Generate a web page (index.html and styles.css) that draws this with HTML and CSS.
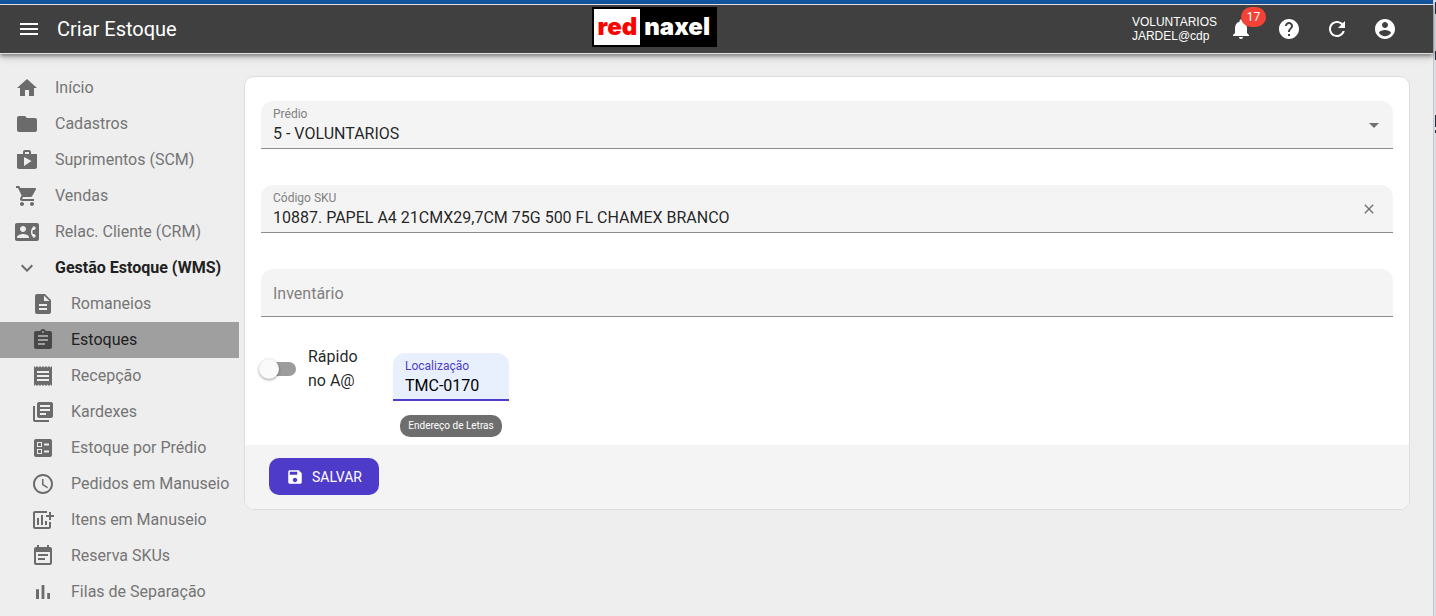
FILE: index.html
```html
<!DOCTYPE html>
<html lang="pt-BR">
<head>
<meta charset="utf-8">
<title>Criar Estoque</title>
<link rel="stylesheet" href="styles.css">
</head>
<body>
<div class="app">
  <header class="topbar">
    <button class="icon-btn" type="button" aria-label="Menu"><svg class="icon" viewBox="0 0 24 24"><path d="M3 18h18v-2H3v2zm0-5h18v-2H3v2zm0-7v2h18V6H3z"/></svg></button>
    <h1 class="title">Criar Estoque</h1>
    <div class="brand"><div class="logo"><span class="logo-red">red</span><span class="logo-naxel">naxel</span></div></div>
    <div class="user"><span>VOLUNTARIOS</span><span>JARDEL@cdp</span></div>
    <div class="actions">
      <button class="icon-btn" type="button" aria-label="Notificações"><svg class="icon" viewBox="0 0 24 24"><path d="M12 22c1.1 0 2-.9 2-2h-4c0 1.1.89 2 2 2zm6-6v-5c0-3.07-1.64-5.64-4.5-6.32V4c0-.83-.67-1.5-1.5-1.5s-1.5.67-1.5 1.5v.68C7.63 5.36 6 7.92 6 11v5l-2 2v1h16v-1l-2-2z"/></svg><span class="badge">17</span></button>
      <button class="icon-btn" type="button" aria-label="Ajuda"><svg class="icon" viewBox="0 0 24 24"><path d="M12 2C6.48 2 2 6.48 2 12s4.48 10 10 10 10-4.48 10-10S17.52 2 12 2zm1 17h-2v-2h2v2zm2.07-7.75l-.9.92C13.45 12.9 13 13.5 13 15h-2v-.5c0-1.1.45-2.1 1.17-2.83l1.24-1.26c.37-.36.59-.86.59-1.41 0-1.1-.9-2-2-2s-2 .9-2 2H8c0-2.21 1.79-4 4-4s4 1.79 4 4c0 .88-.36 1.68-.93 2.25z"/></svg></button>
      <button class="icon-btn" type="button" aria-label="Atualizar"><svg class="icon" viewBox="0 0 24 24"><path d="M17.65 6.35C16.2 4.9 14.21 4 12 4c-4.42 0-7.99 3.58-7.99 8s3.57 8 7.99 8c3.73 0 6.84-2.55 7.73-6h-2.08c-.82 2.33-3.04 4-5.65 4-3.31 0-6-2.69-6-6s2.69-6 6-6c1.66 0 3.14.69 4.22 1.78L13 11h7V4l-2.35 2.35z"/></svg></button>
      <button class="icon-btn" type="button" aria-label="Perfil"><svg class="icon" viewBox="0 0 24 24"><path d="M12 2C6.48 2 2 6.48 2 12s4.48 10 10 10 10-4.48 10-10S17.52 2 12 2zm0 3c1.66 0 3 1.34 3 3s-1.34 3-3 3-3-1.34-3-3 1.34-3 3-3zm0 14.2c-2.5 0-4.71-1.28-6-3.22.03-1.99 4-3.08 6-3.08 1.99 0 5.97 1.09 6 3.08-1.29 1.94-3.5 3.22-6 3.22z"/></svg></button>
    </div>
  </header>
  <div class="body">
    <nav class="sidebar">
      <a class="item" href="#"><svg class="icon" viewBox="0 0 24 24"><path d="M10 20v-6h4v6h5v-8h3L12 3 2 12h3v8z"/></svg>Início</a>
      <a class="item" href="#"><svg class="icon" viewBox="0 0 24 24"><path d="M10 4H4c-1.1 0-1.99.9-1.99 2L2 18c0 1.1.9 2 2 2h16c1.1 0 2-.9 2-2V8c0-1.1-.9-2-2-2h-8l-2-2z"/></svg>Cadastros</a>
      <a class="item" href="#"><svg class="icon" viewBox="0 0 24 24"><path d="M16 6V4c0-1.11-.89-2-2-2h-4c-1.11 0-2 .89-2 2v2H2v13c0 1.11.89 2 2 2h16c1.11 0 2-.89 2-2V6h-6zm-6-2h4v2h-4V4zM9 18V9l7.5 4L9 18z"/></svg>Suprimentos (SCM)</a>
      <a class="item" href="#"><svg class="icon" viewBox="0 0 24 24"><path d="M7 18c-1.1 0-1.99.9-1.99 2S5.9 22 7 22s2-.9 2-2-.9-2-2-2zM1 2v2h2l3.6 7.59-1.35 2.45c-.16.28-.25.61-.25.96 0 1.1.9 2 2 2h12v-2H7.42c-.14 0-.25-.11-.25-.25l.03-.12.9-1.63h7.45c.75 0 1.41-.41 1.75-1.03l3.58-6.49c.08-.14.12-.31.12-.48 0-.55-.45-1-1-1H5.21l-.94-2H1zm16 16c-1.1 0-1.99.9-1.99 2s.89 2 1.99 2 2-.9 2-2-.9-2-2-2z"/></svg>Vendas</a>
      <a class="item" href="#"><svg class="icon" viewBox="0 0 24 24"><path d="M22 3H2C.9 3 0 3.9 0 5v14c0 1.1.9 2 2 2h20c1.1 0 1.99-.9 1.99-2L24 5c0-1.1-.9-2-2-2zM8 6c1.66 0 3 1.34 3 3s-1.34 3-3 3-3-1.34-3-3 1.34-3 3-3zm6 12H2v-1c0-2 4-3.1 6-3.1s6 1.1 6 3.1v1zm3.85-4h1.64L21 16l-1.99 1.99c-1.31-.98-2.28-2.38-2.73-3.99-.18-.64-.28-1.31-.28-2s.1-1.36.28-2c.45-1.62 1.42-3.01 2.73-3.99L21 8l-1.51 2h-1.64c-.22.63-.35 1.3-.35 2s.13 1.37.35 2z"/></svg>Relac. Cliente (CRM)</a>
      <a class="item open" href="#"><svg class="icon" viewBox="0 0 24 24"><path d="M16.59 8.59L12 13.17 7.41 8.59 6 10l6 6 6-6z"/></svg>Gestão Estoque (WMS)</a>
      <a class="item sub" href="#"><svg class="icon" viewBox="0 0 24 24"><path d="M14 2H6c-1.1 0-1.99.9-1.99 2L4 20c0 1.1.89 2 1.99 2H18c1.1 0 2-.9 2-2V8l-6-6zm2 16H8v-2h8v2zm0-4H8v-2h8v2zm-3-5V3.5L18.5 9H13z"/></svg>Romaneios</a>
      <a class="item sub selected" href="#" aria-current="page"><svg class="icon" viewBox="0 0 24 24"><path d="M19 3h-4.18C14.4 1.84 13.3 1 12 1c-1.3 0-2.4.84-2.82 2H5c-1.1 0-2 .9-2 2v14c0 1.1.9 2 2 2h14c1.1 0 2-.9 2-2V5c0-1.1-.9-2-2-2zm-7 0c.55 0 1 .45 1 1s-.45 1-1 1-1-.45-1-1 .45-1 1-1zm2 14H7v-2h7v2zm3-4H7v-2h10v2zm0-4H7V7h10v2z"/></svg>Estoques</a>
      <a class="item sub" href="#"><svg class="icon" viewBox="0 0 24 24"><path d="M18 17H6v-2h12v2zm0-4H6v-2h12v2zm0-4H6V7h12v2zM3 22l1.5-1.5L6 22l1.5-1.5L9 22l1.5-1.5L12 22l1.5-1.5L15 22l1.5-1.5L18 22l1.5-1.5L21 22V2l-1.5 1.5L18 2l-1.5 1.5L15 2l-1.5 1.5L12 2l-1.5 1.5L9 2 7.5 3.5 6 2 4.5 3.5 3 2v20z"/></svg>Recepção</a>
      <a class="item sub" href="#"><svg class="icon" viewBox="0 0 24 24"><path d="M4 6H2v14c0 1.1.9 2 2 2h14v-2H4V6zm16-4H8c-1.1 0-2 .9-2 2v12c0 1.1.9 2 2 2h12c1.1 0 2-.9 2-2V4c0-1.1-.9-2-2-2zm-1 9H9V9h10v2zm-4 4H9v-2h6v2zm4-8H9V5h10v2z"/></svg>Kardexes</a>
      <a class="item sub" href="#"><svg class="icon" viewBox="0 0 24 24"><path d="M13 9.5h5v-2h-5v2zm0 7h5v-2h-5v2zm6 4.5H5c-1.1 0-2-.9-2-2V5c0-1.1.9-2 2-2h14c1.1 0 2 .9 2 2v14c0 1.1-.9 2-2 2zM6 11h5V6H6v5zm1-4h3v3H7V7zM6 18h5v-5H6v5zm1-4h3v3H7v-3z"/></svg>Estoque por Prédio</a>
      <a class="item sub" href="#"><svg class="icon" viewBox="0 0 24 24"><path d="M11.99 2C6.47 2 2 6.48 2 12s4.47 10 9.99 10C17.52 22 22 17.52 22 12S17.52 2 11.99 2zM12 20c-4.42 0-8-3.58-8-8s3.58-8 8-8 8 3.58 8 8-3.58 8-8 8zm.5-13H11v6l5.25 3.15.75-1.23-4.5-2.67z"/></svg>Pedidos em Manuseio</a>
      <a class="item sub" href="#"><svg class="icon" viewBox="0 0 24 24"><path d="M6 10h2v7H6zM10 7h2v10h-2zM14 13h2v4h-2zM18 14h2v5c0 1.1-.9 2-2 2H4c-1.1 0-2-.9-2-2V5c0-1.1.9-2 2-2h12v2H4v14h14zM18 4h2v3h3v2h-3v3h-2V9h-3V7h3z"/></svg>Itens em Manuseio</a>
      <a class="item sub" href="#"><svg class="icon" viewBox="0 0 24 24"><path d="M17 10H7v2h10v-2zm2-7h-1V1h-2v2H8V1H6v2H5c-1.11 0-1.99.9-1.99 2L3 19c0 1.1.89 2 2 2h14c1.1 0 2-.9 2-2V5c0-1.1-.9-2-2-2zm0 16H5V8h14v11zm-5-5H7v2h7v-2z"/></svg>Reserva SKUs</a>
      <a class="item sub" href="#"><svg class="icon" viewBox="0 0 24 24"><path d="M5 9.2h3V19H5zM10.6 5h2.8v14h-2.8zm5.6 8H19v6h-2.8z"/></svg>Filas de Separação</a>
    </nav>
    <main class="main">
      <form class="card">
        <div class="fields">
          <div class="field">
            <label for="predio">Prédio</label>
            <select id="predio"><option>5 - VOLUNTARIOS</option></select>
            <svg class="icon arrow" viewBox="0 0 24 24"><path d="M7 10l5 5 5-5z"/></svg>
          </div>
          <div class="field">
            <label for="sku">Código SKU</label>
            <input id="sku" type="text" value="10887. PAPEL A4 21CMX29,7CM 75G 500 FL CHAMEX BRANCO">
            <button class="clear" type="button" aria-label="Limpar"><svg viewBox="0 0 24 24"><path d="M19 6.41L17.59 5 12 10.59 6.41 5 5 6.41 10.59 12 5 17.59 6.41 19 12 13.41 17.59 19 19 17.59 13.41 12z"/></svg></button>
          </div>
          <div class="field empty">
            <input id="inventario" type="text" placeholder="Inventário" aria-label="Inventário">
          </div>
          <div class="row">
            <label class="switch"><input type="checkbox"><span>Rápido no A@</span></label>
            <div class="location">
              <div class="field focused">
                <label for="local">Localização</label>
                <input id="local" type="text" value="TMC-0170">
              </div>
              <span class="tip">Endereço de Letras</span>
            </div>
          </div>
        </div>
        <footer class="card-actions">
          <button class="save" type="submit"><svg viewBox="0 0 24 24"><path d="M17 3H5c-1.11 0-2 .9-2 2v14c0 1.1.89 2 2 2h14c1.1 0 2-.9 2-2V7l-4-4zm-5 16c-1.66 0-3-1.34-3-3s1.34-3 3-3 3 1.34 3 3-1.34 3-3 3zm3-10H5V5h10v4z"/></svg>SALVAR</button>
        </footer>
      </form>
    </main>
  </div>
</div>
<div class="edge"></div>
</body>
</html>
```
FILE: styles.css
```css
* { box-sizing: border-box; }
body {
  margin: 0;
  height: 100vh;
  display: flex;
  overflow: hidden;
  background: #eee;
  color: rgba(0, 0, 0, .87);
  font: 16px/24px Roboto, sans-serif;
}
button, input, select { font: inherit; color: inherit; border: 0; margin: 0; padding: 0; background: none; }
svg { fill: currentColor; flex: none; display: block; }
.icon { width: 24px; height: 24px; }
.app { flex: 1; min-width: 0; border-top: 4px solid #1455a0; }
.edge {
  width: 3px;
  border-left: 1px solid #c6c8d0;
  background: linear-gradient(#1a2b42 0 0) right 2px / 1px 12px no-repeat,
    linear-gradient(#1a2b42 0 0) right 51px / 1px 9px no-repeat,
    linear-gradient(#1a2b42 0 0) right 115px / 1px 12px no-repeat,
    linear-gradient(#1a2b42 0 0) right 130px / 1px 3px no-repeat,
    #dcdde6;
}
.topbar {
  position: relative;
  display: flex;
  align-items: center;
  height: 50px;
  padding: 0 24px 0 5px;
  border: solid #e0e0e0;
  border-width: 1px 0;
  background: #404040;
  color: #fff;
  box-shadow: 0 2px 4px rgba(0, 0, 0, .4), 0 4px 8px rgba(0, 0, 0, .14);
}
.icon-btn { position: relative; width: 48px; height: 48px; display: grid; place-items: center; }
.title { margin: 0 0 0 4px; font-size: 20px; font-weight: 400; }
.brand { flex: 1; display: flex; justify-content: center; padding-bottom: 4px; }
.logo {
  display: flex;
  height: 40px;
  border: 2px solid #000;
  background: #000;
  font: 900 24px/36px Inter, sans-serif;
}
.logo-red { padding: 0 3px 0 4px; background: #fff; color: #f00; }
.logo-naxel { padding: 0 5px 0 4px; }
.user { display: flex; flex-direction: column; font: 12px/14px "Liberation Sans", Arial, sans-serif; }
.actions { display: flex; }
.badge {
  position: absolute;
  top: 2px;
  left: 24px;
  min-width: 25px;
  height: 20px;
  border-radius: 10px;
  background: #f44336;
  font-size: 12px;
  line-height: 20px;
}
.body { display: flex; }
.sidebar { width: 239px; flex: none; padding-top: 16px; }
.item {
  display: flex;
  align-items: center;
  gap: 16px;
  height: 36px;
  padding-left: 15px;
  color: #757575;
  text-decoration: none;
  white-space: nowrap;
}
.item .icon { color: #6b6b6b; }
.sub { padding-left: 31px; }
.open { color: #212121; font-weight: 700; }
.selected { background: #9f9f9f; color: #212121; }
.selected .icon { color: #484848; }
.main { flex: 1; min-width: 0; padding: 22px 23px 0 5px; }
.card {
  border: 1px solid #ddd;
  border-radius: 10px;
  background: #fff;
  overflow: hidden;
}
.fields { display: flex; flex-direction: column; gap: 36px; padding: 24px 16px 8px; }
.field {
  position: relative;
  height: 48px;
  border-radius: 12px 12px 0 0;
  border-bottom: 1px solid #8c8c8c;
  background: #f4f4f4;
}
.field label { position: absolute; top: 5px; left: 12px; font-size: 12px; line-height: 16px; color: #808080; }
.field input, .field select { width: 100%; height: 47px; padding: 18px 48px 0 12px; border-radius: inherit; outline: 0; appearance: none; }
.field.empty input { padding-top: 2px; }
.field input::placeholder { color: #808080; opacity: 1; }
.arrow { position: absolute; top: 12px; right: 7px; color: #707070; pointer-events: none; }
.clear { position: absolute; top: 16px; right: 16px; color: #707070; }
.clear svg { width: 16px; height: 16px; }
.row { display: flex; align-items: flex-start; }
.switch { display: flex; align-items: center; gap: 12px; width: 132px; padding-right: 24px; margin-top: -8px; }
.switch input {
  position: relative;
  flex: none;
  width: 35px;
  height: 14px;
  border-radius: 7px;
  background: #9c9c9c;
  appearance: none;
}
.switch input::before {
  content: "";
  position: absolute;
  top: -3px;
  left: -2px;
  width: 20px;
  height: 20px;
  border-radius: 50%;
  background: #fafafa;
  box-shadow: 0 1px 3px rgba(0, 0, 0, .4);
}
.location { width: 116px; display: flex; flex-direction: column; align-items: center; gap: 14px; }
.field.focused { width: 100%; border-bottom: 2px solid #4e3bc9; background: #e8f0fe; color: #000; }
.field.focused label { color: #4e3bc9; }
.field.focused input { height: 46px; padding-right: 12px; }
.tip { padding: 0 8px; border-radius: 10px; background: #6e6e6e; color: #fff; font-size: 10px; line-height: 22px; }
.card-actions { height: 64px; padding: 13px 24px; background: #f4f4f4; }
.save {
  display: flex;
  align-items: center;
  gap: 8px;
  height: 37px;
  padding: 0 17px;
  border-radius: 10px;
  background: #4e3bc9;
  color: #fff;
  font-size: 14px;
}
.save svg { width: 18px; height: 18px; }
```
